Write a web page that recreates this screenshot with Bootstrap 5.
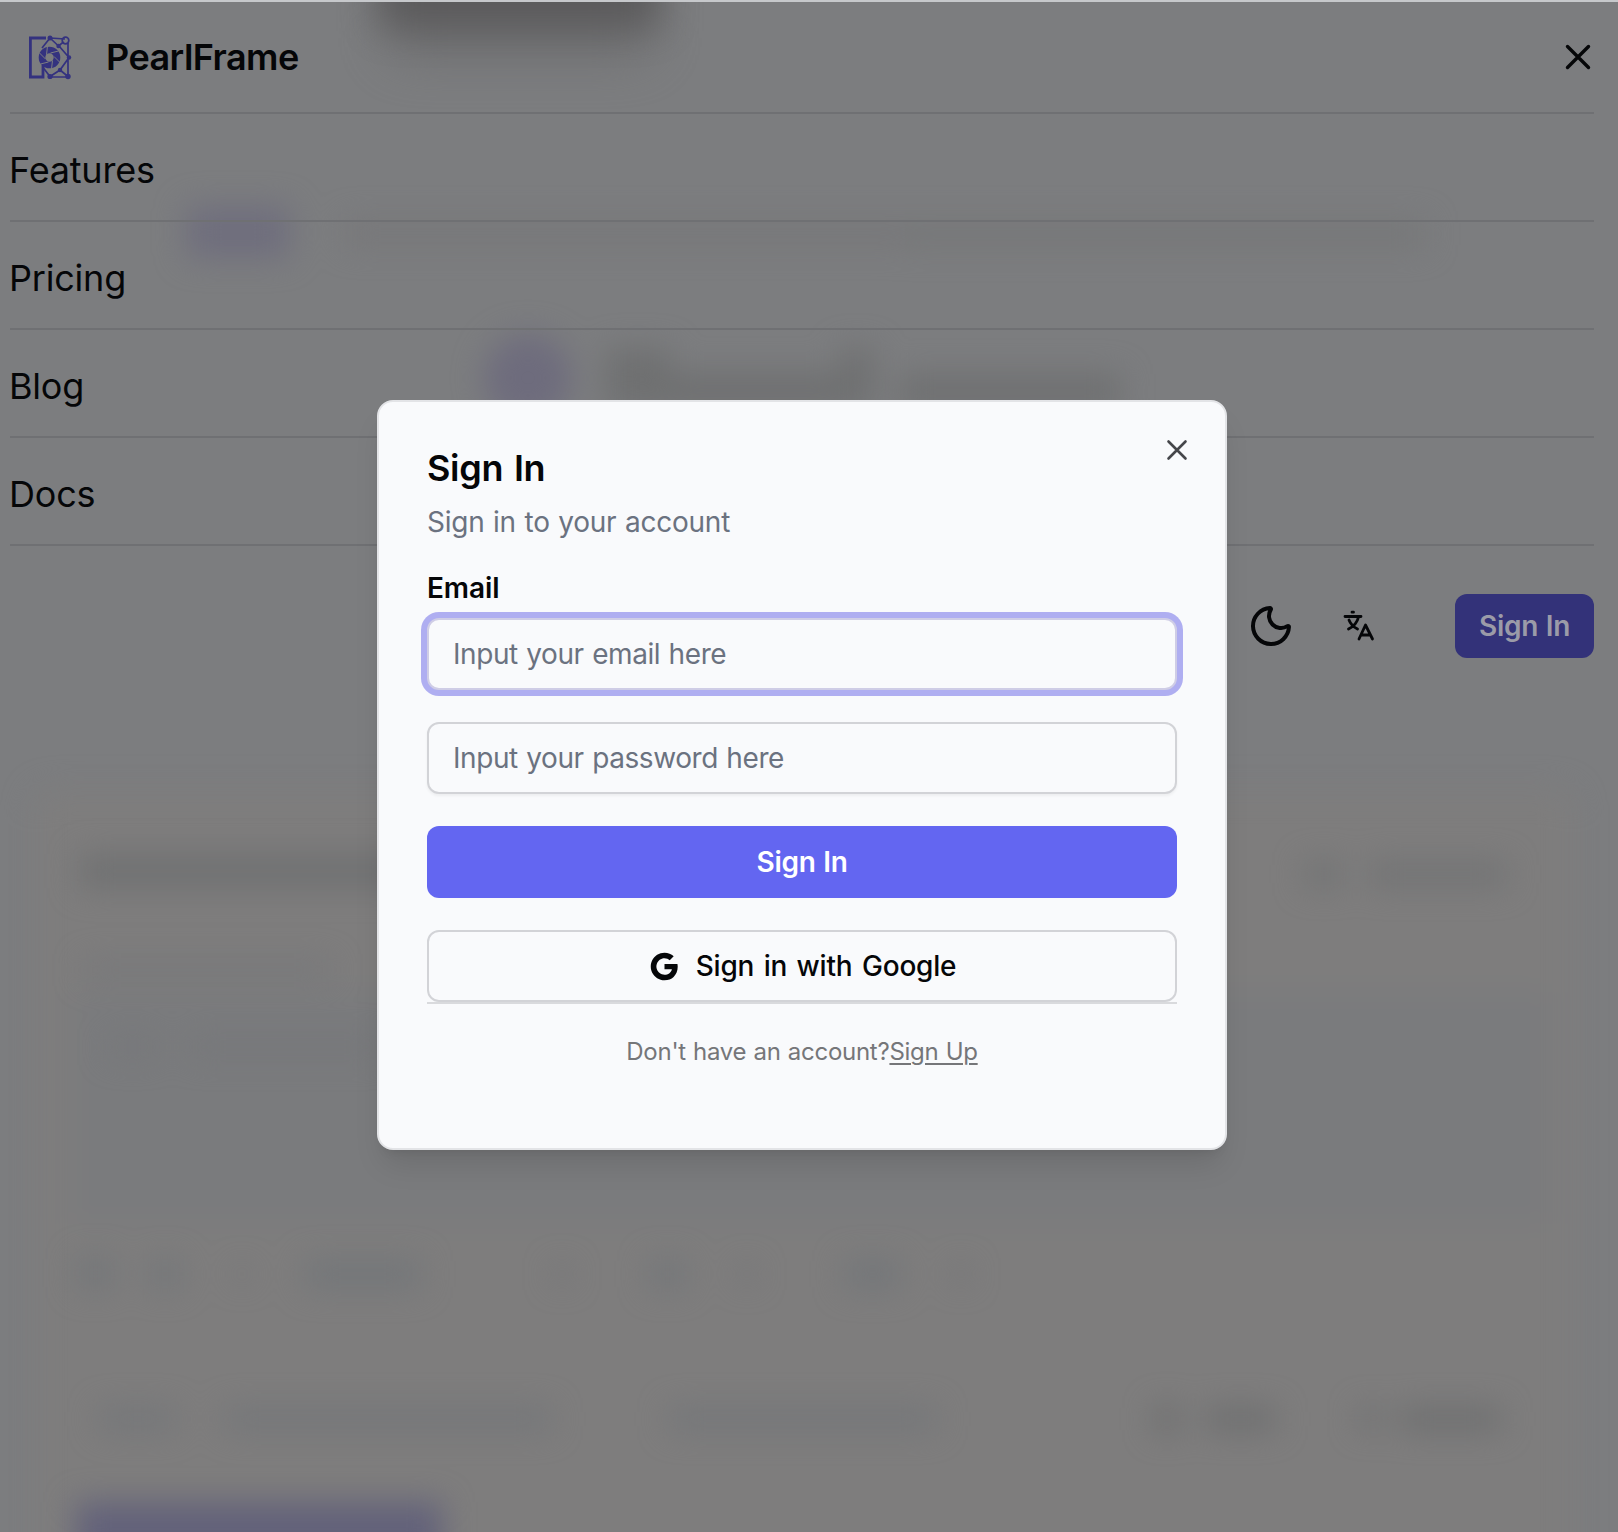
<!DOCTYPE html>
<html lang="en">
<head>
<meta charset="utf-8">
<meta name="viewport" content="width=device-width, initial-scale=1">
<title>PearlFrame</title>
<link href="https://cdn.jsdelivr.net/npm/bootstrap@5.3.0/dist/css/bootstrap.min.css" rel="stylesheet">
<style>
  body { font-family: Inter, "Liberation Sans", sans-serif; background: #7c7d7f; color: #050608; width: 1618px; height: 1532px; overflow: hidden; }
  .haze { inset: 0; z-index: 0; }
  .page-shell { height: 1532px; padding: 0 24px 0 10px; border-top: 2px solid #c6c8cb; z-index: 1; }
  .brand-row { height: 112px; padding: 0 2px 0 17px; border-bottom: 2px solid #6f7073; }
  .brand-name { font-size: 36px; font-weight: 600; line-height: 48px; letter-spacing: -.55px; margin-left: 33px; }
  .menu-link { height: 108px; padding-top: 6px; border-bottom: 2px solid #6f7073; font-size: 36px; color: #050608; text-decoration: none; letter-spacing: -.2px; }
  .menu-link span { margin-left: -1px; }
  .tools { margin-top: 48px; height: 64px; }
  .tool-login { width: 139px; height: 64px; border-radius: 12px; background: #333279; color: #9b9ba8; font-size: 28px; font-weight: 600; letter-spacing: -.3px; word-spacing: 1px; padding: 0; border: 0; margin-left: 80px; }
  .dialog-wrap { inset: 0; padding: 400px 0 0 377px; z-index: 5; }
  .signin { width: 850px; height: 750px; border: 2px solid #e3e4e7; border-radius: 16px; background: #f9fafc; padding: 48px; box-shadow: 0 20px 30px -6px rgba(0,0,0,.11), 0 8px 12px -8px rgba(0,0,0,.12); }
  .signin h1 { font-size: 36px; line-height: 36px; font-weight: 600; letter-spacing: -.3px; word-spacing: 2px; margin: 0; }
  .sub-text { font-size: 28px; line-height: 40px; letter-spacing: -.25px; word-spacing: 1px; margin: 16px 0 32px; color: #6b7280; }
  .field-label { font-size: 28px; line-height: 28px; font-weight: 600; letter-spacing: -.1px; margin: 0 0 16px; }
  .signin .form-control { height: 72px; border: 2px solid #d2d3d7; border-radius: 12px; background: #f9fafc; font-size: 28px; letter-spacing: -.42px; word-spacing: 1px; padding: 0 24px; box-shadow: 0 2px 3px rgba(0,0,0,.05); margin-bottom: 32px; }
  .signin .form-control::placeholder { color: #6b7280; opacity: 1; }
  .signin .form-control.is-current { box-shadow: 0 0 0 6px #afaef1; border-color: #cfcde6; }
  .act { height: 72px; border-radius: 12px; font-size: 28px; font-weight: 600; letter-spacing: -.3px; word-spacing: 1px; padding: 0; }
  .act-main { background: #6366f1; color: #fff; border: 0; margin-bottom: 32px; }
  .act-google { border: 2px solid #d2d3d7; color: #050608; }
  .act-google svg { margin-right: 15px; }
  .act-google span { font-weight: 550; letter-spacing: -.2px; word-spacing: 2.200px; }
  .foot { border-top: 2px solid #d9dadd; padding-top: 32px; font-size: 24px; line-height: 32px; letter-spacing: -.27px; word-spacing: .7px; color: #757679; }
  .foot a { color: #757679; text-decoration-thickness: 2px; text-underline-offset: 3px; }
  .close-x { right: 37px; top: 37px; line-height: 0; border: 0; background: none; padding: 0; }
</style>
<script src="https://cdn.jsdelivr.net/npm/bootstrap@5.3.0/dist/js/bootstrap.bundle.min.js"></script>
</head>
<body class="position-relative">
<!-- out-of-focus page behind the menu -->
<svg class="haze position-absolute" width="1618" height="1532" viewBox="0 0 1618 1532" aria-hidden="true">
  <defs>
    <filter id="b1" x="-50%" y="-100%" width="200%" height="300%" color-interpolation-filters="sRGB"><feGaussianBlur stdDeviation="15"/></filter>
    <filter id="b2" x="-50%" y="-200%" width="200%" height="500%" color-interpolation-filters="sRGB"><feGaussianBlur stdDeviation="26"/></filter>
    <filter id="b3" x="-50%" y="-200%" width="200%" height="500%" color-interpolation-filters="sRGB"><feGaussianBlur stdDeviation="19"/></filter>
  </defs>
  <g filter="url(#b1)">
    <rect x="34" y="790" width="1540" height="800" rx="20" fill="#7e7d7d"/>
    <rect x="72" y="992" width="1475" height="232" rx="14" fill="#7a7b7d"/>
  </g>
  <rect x="390" y="-60" width="260" height="115" fill="#68686a" filter="url(#b2)" opacity=".7"/>
  <rect x="378" y="-80" width="282" height="108" fill="#565556" filter="url(#b3)" opacity=".8"/>
  <g filter="url(#b1)">
    <rect x="186" y="206" width="104" height="52" rx="8" fill="#6f6e7d"/>
    <rect x="345" y="221" width="560" height="24" fill="#777779"/>
    <rect x="905" y="221" width="520" height="26" fill="#767778"/>
    <circle cx="528" cy="378" r="44" fill="#6e6c7d"/>
    <path d="M606 348h64v62h-64zM670 372h170v38H670zM840 348h34v62h-34zM900 374h220v36H900z" fill="#6f7071"/>
    <path d="M80 854h325v34H80z" fill="#707172"/>
    <path d="M1305 862h38v24h-38zM1370 862h136v24h-136z" fill="#727374"/>
    <path d="M85 962h245v16H85zM110 1038h45v18h-45zM190 1038h190v18H190z" fill="#76777a"/>
    <path d="M78 1258h35v30H78zM150 1260h30v28h-30zM305 1260h115v28H305zM650 1260h35v28h-35zM845 1260h55v28h-55z" fill="#737679"/>
    <path d="M235 1268h14v12h-14zM555 1266h14v16h-14zM740 1266h14v16h-14zM954 1266h14v16h-14z" fill="#727477"/>
    <path d="M100 1408h75v22h-75zM225 1408h325v22H225zM670 1408h265v22H670z" fill="#747679"/>
    <path d="M1155 1406h24v26h-24zM1205 1408h70v22h-70zM1360 1408h20v20h-20zM1400 1408h100v22h-100z" fill="#6d6e6f"/>
    <rect x="76" y="1502" width="366" height="80" fill="#63627a"/>
  </g>
</svg>

<div class="page-shell position-relative d-flex flex-column">
  <header class="brand-row d-flex align-items-center">
    <svg width="46" height="46" viewBox="0 0 46 46" fill="none" stroke="#34327f" stroke-width="1.700">
      <path stroke-width="2.800" d="M19 4H3.400v39H16V31"/>
      <path d="M23 4l15 1M23 4l-8 10M23 4l8.500 8 5-4M32 12l10 11.500-9 12.500-10 6.500-7-9M41 9v34H23M33 36l8 6.500"/>
      <circle cx="38.500" cy="6.500" r="3.300"/>
      <g fill="#34327f" stroke="none"><circle cx="23" cy="4" r="2.500"/><circle cx="31.500" cy="12" r="2.200"/><circle cx="42" cy="23.500" r="2.200"/><circle cx="33" cy="36" r="2.200"/><circle cx="23" cy="42.500" r="2.600"/><circle cx="41" cy="42.500" r="2.700"/></g>
      <circle cx="22.500" cy="23.500" r="7.500" stroke-width="6.600"/>
      <g stroke="#7c7d7f" stroke-width="1"><path d="M19.500 20.800L20.500 12M23.500 19l8-2M27 22.500l6 6M25.500 26.500l-1 8.500M21.500 28l-8 2M18.500 25l-6-6"/></g>
    </svg>
    <span class="brand-name">PearlFrame</span>
    <svg class="ms-auto" width="28" height="28" viewBox="0 0 28 28" stroke="#050608" stroke-width="3.400" stroke-linecap="round"><path d="M3.500 3.500l21 21M24.500 3.500l-21 21"/></svg>
  </header>
  <nav class="d-flex flex-column">
    <a class="menu-link d-flex align-items-center" href="#"><span>Features</span></a>
    <a class="menu-link d-flex align-items-center" href="#"><span>Pricing</span></a>
    <a class="menu-link d-flex align-items-center" href="#"><span>Blog</span></a>
    <a class="menu-link d-flex align-items-center" href="#"><span>Docs</span></a>
  </nav>
  <div class="tools d-flex align-items-center justify-content-end">
    <svg width="48" height="48" viewBox="0 0 24 24" fill="none" stroke="#050608" stroke-width="2" stroke-linecap="round" stroke-linejoin="round"><path d="M20.985 12.486a9 9 0 1 1-9.473-9.472c.405-.022.617.46.402.803a6 6 0 0 0 8.268 8.268c.344-.215.825-.004.803.401"/></svg>
    <svg class="ms-5" width="32" height="32" viewBox="0 0 32 32" fill="none" stroke="#050608" stroke-width="2.800" stroke-linecap="round" stroke-linejoin="round"><path d="M9 2.200h1.500M2 6.500h16M15.500 7c-1 4.500-5 9.500-10 12M6 10c1.500 4 4.500 7 8.500 9M16 29L22.500 15l7 14M18 25h9"/></svg>
    <button class="btn tool-login">Sign In</button>
  </div>
</div>

<div class="dialog-wrap position-absolute">
  <section class="signin position-relative" role="dialog" aria-label="Sign In">
    <button class="close-x position-absolute" aria-label="Close"><svg width="22" height="22" viewBox="0 0 22 22" stroke="#45464a" stroke-width="2.600" stroke-linecap="round"><path d="M2.500 2.500l17 17M19.500 2.500l-17 17"/></svg></button>
    <h1>Sign In</h1>
    <p class="sub-text">Sign in to your account</p>
    <label class="field-label d-block" for="em">Email</label>
    <input id="em" class="form-control is-current" type="email" placeholder="Input your email here">
    <input class="form-control" type="password" placeholder="Input your password here" aria-label="Password">
    <button class="btn act act-main w-100">Sign In</button>
    <button class="btn act act-google w-100 d-flex align-items-center justify-content-center">
      <svg width="33" height="33" viewBox="0 0 24 24" fill="#050608"><path d="M3.064 7.509C4.709 4.241 8.091 2 12 2c2.695 0 4.959.991 6.691 2.605l-2.868 2.868C14.786 6.482 13.468 5.977 12 5.977c-2.605 0-4.809 1.759-5.595 4.123-.2.600-.314 1.241-.314 1.900s.114 1.300.314 1.900c.786 2.364 2.990 4.123 5.595 4.123 1.345 0 2.491-.355 3.386-.955 1.059-.709 1.764-1.768 1.996-3.018H12v-3.868h9.418c.118.654.182 1.336.182 2.045 0 3.046-1.091 5.609-2.982 7.350C16.964 21.105 14.700 22 12 22c-3.909 0-7.291-2.241-8.936-5.509C2.386 15.141 2 13.614 2 12s.386-3.141 1.064-4.491z"/></svg>
      <span>Sign in with Google</span>
    </button>
    <div class="foot text-center">Don't have an account?<a href="#">Sign Up</a></div>
  </section>
</div>
</body>
</html>
